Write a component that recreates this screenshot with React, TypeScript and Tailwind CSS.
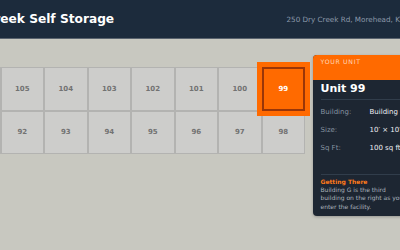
const topRow = [106, 105, 104, 103, 102, 101, 100, 99];
const bottomRow = [91, 92, 93, 94, 95, 96, 97, 98];

function Cell({ n, active }: { n: number; active?: boolean }) {
  if (active) {
    return (
      <div className="relative z-10 flex h-[43.5px] w-[43.5px] items-center justify-center border-2 border-[#9a3608] bg-[#ff6a00] text-[7px] font-bold text-white shadow-[0_0_0_5px_#ff6a00]">
        {n}
      </div>
    );
  }
  return (
    <div className="flex h-[43.5px] w-[43.5px] items-center justify-center border border-[#b3b3b1] bg-[#cdcdcb] text-[7px] font-bold text-[#727272]">
      {n}
    </div>
  );
}

function InfoRow({ label, value }: { label: string; value: string }) {
  return (
    <div className="flex h-[18px] items-center whitespace-nowrap text-[7px]">
      <span className="w-[49px] shrink-0 text-[#8592a0]">{label}</span>
      <span className="text-[#eef0f2]">{value}</span>
    </div>
  );
}

export default function App() {
  return (
    <div className="h-[250px] w-[400px] overflow-hidden bg-[#c8c8c0] font-['DejaVu_Sans',sans-serif]">
      <div className="ml-[-55px] w-[471px]">
        <header className="flex h-[39px] items-center justify-between border-b border-[#59636e] bg-[#1c2b3c] px-3">
          <h1 className="whitespace-nowrap text-[12.2px] font-bold text-white">Dry Creek Self Storage</h1>
          <span className="mt-[3px] whitespace-nowrap text-[7.2px] text-[#8d9aab]">250 Dry Creek Rd, Morehead, KY</span>
        </header>

        <main className="flex items-start gap-[7.5px] pl-3 pt-4">
          <div className="mt-[12px] flex flex-col">
            <div className="flex">
              {topRow.map((n) => (
                <Cell key={n} n={n} active={n === 99} />
              ))}
            </div>
            <div className="flex">
              {bottomRow.map((n) => (
                <Cell key={n} n={n} />
              ))}
            </div>
          </div>

          <aside className="w-[106px] shrink-0 overflow-hidden rounded-[4px] bg-[#1d2632] shadow-[0_1px_3px_rgba(0,0,0,0.25)]">
            <div className="h-[25px] bg-[#ff6a00] px-2 pt-[3px] text-[6.2px] leading-[8px] tracking-[0.7px] text-[#ffd6b8]">
              YOUR UNIT
            </div>
            <div className="px-2">
              <div className="border-b border-[#313d4b] pb-[4px] pt-[2px] text-[11px] font-bold leading-[13px] text-white">
                Unit 99
              </div>
              <div className="pb-[17px] pt-[3px]">
                <InfoRow label="Building:" value="Building G" />
                <InfoRow label="Size:" value="10′ × 10′" />
                <InfoRow label="Sq Ft:" value="100 sq ft" />
              </div>
            </div>
            <div className="mx-2 border-t border-[#313d4b] pb-[5px] pt-[1.5px]">
              <div className="text-[6px] font-bold leading-[9px] text-[#ff7a1a]">Getting There</div>
              <p className="text-[6px] leading-[8.5px] text-[#aab3bd]">
                Building G is the third building on the right as you enter the facility.
              </p>
            </div>
          </aside>
        </main>
      </div>
    </div>
  );
}
